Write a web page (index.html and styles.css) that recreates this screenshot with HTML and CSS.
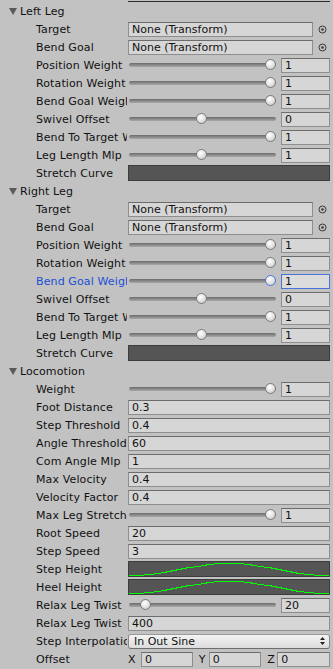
FILE: index.html
```html
<!DOCTYPE html>
<html>
<head>
<meta charset="utf-8">
<link rel="stylesheet" href="styles.css">
</head>
<body>
<div class="panel">
  <div class="topline"></div>

  <div class="row hdr"><div class="hlabel"><span class="tri"></span>Left Leg</div></div>
  <div class="row"><div class="label">Target</div><div class="ctrl"><div class="field">None (Transform)</div><span class="pick"><svg width="9" height="9" viewBox="0 0 9 9"><circle cx="4.5" cy="4.5" r="3.5" fill="none" stroke="#3a3a3a" stroke-width="1"/><circle cx="4.5" cy="4.5" r="1.3" fill="#3a3a3a"/></svg></span></div></div>
  <div class="row"><div class="label">Bend Goal</div><div class="ctrl"><div class="field">None (Transform)</div><span class="pick"><svg width="9" height="9" viewBox="0 0 9 9"><circle cx="4.5" cy="4.5" r="3.5" fill="none" stroke="#3a3a3a" stroke-width="1"/><circle cx="4.5" cy="4.5" r="1.3" fill="#3a3a3a"/></svg></span></div></div>
  <div class="row"><div class="label">Position Weight</div><div class="ctrl"><div class="slider"><div class="track"></div><div class="thumb" style="left:137px"></div></div><div class="field num">1</div></div></div>
  <div class="row"><div class="label">Rotation Weight</div><div class="ctrl"><div class="slider"><div class="track"></div><div class="thumb" style="left:137px"></div></div><div class="field num">1</div></div></div>
  <div class="row"><div class="label">Bend Goal Weight</div><div class="ctrl"><div class="slider"><div class="track"></div><div class="thumb" style="left:137px"></div></div><div class="field num">1</div></div></div>
  <div class="row"><div class="label">Swivel Offset</div><div class="ctrl"><div class="slider"><div class="track"></div><div class="thumb" style="left:68px"></div></div><div class="field num">0</div></div></div>
  <div class="row"><div class="label">Bend To Target Weight</div><div class="ctrl"><div class="slider"><div class="track"></div><div class="thumb" style="left:137px"></div></div><div class="field num">1</div></div></div>
  <div class="row"><div class="label">Leg Length Mlp</div><div class="ctrl"><div class="slider"><div class="track"></div><div class="thumb" style="left:68px"></div></div><div class="field num">1</div></div></div>
  <div class="row"><div class="label">Stretch Curve</div><div class="ctrl"><div class="curve"></div></div></div>

  <div class="row hdr"><div class="hlabel"><span class="tri"></span>Right Leg</div></div>
  <div class="row"><div class="label">Target</div><div class="ctrl"><div class="field">None (Transform)</div><span class="pick"><svg width="9" height="9" viewBox="0 0 9 9"><circle cx="4.5" cy="4.5" r="3.5" fill="none" stroke="#3a3a3a" stroke-width="1"/><circle cx="4.5" cy="4.5" r="1.3" fill="#3a3a3a"/></svg></span></div></div>
  <div class="row"><div class="label">Bend Goal</div><div class="ctrl"><div class="field">None (Transform)</div><span class="pick"><svg width="9" height="9" viewBox="0 0 9 9"><circle cx="4.5" cy="4.5" r="3.5" fill="none" stroke="#3a3a3a" stroke-width="1"/><circle cx="4.5" cy="4.5" r="1.3" fill="#3a3a3a"/></svg></span></div></div>
  <div class="row"><div class="label">Position Weight</div><div class="ctrl"><div class="slider"><div class="track"></div><div class="thumb" style="left:137px"></div></div><div class="field num">1</div></div></div>
  <div class="row"><div class="label">Rotation Weight</div><div class="ctrl"><div class="slider"><div class="track"></div><div class="thumb" style="left:137px"></div></div><div class="field num">1</div></div></div>
  <div class="row focus"><div class="label">Bend Goal Weight</div><div class="ctrl"><div class="slider"><div class="track"></div><div class="thumb" style="left:137px"></div></div><div class="field num">1</div></div></div>
  <div class="row"><div class="label">Swivel Offset</div><div class="ctrl"><div class="slider"><div class="track"></div><div class="thumb" style="left:68px"></div></div><div class="field num">0</div></div></div>
  <div class="row"><div class="label">Bend To Target Weight</div><div class="ctrl"><div class="slider"><div class="track"></div><div class="thumb" style="left:137px"></div></div><div class="field num">1</div></div></div>
  <div class="row"><div class="label">Leg Length Mlp</div><div class="ctrl"><div class="slider"><div class="track"></div><div class="thumb" style="left:68px"></div></div><div class="field num">1</div></div></div>
  <div class="row"><div class="label">Stretch Curve</div><div class="ctrl"><div class="curve"></div></div></div>

  <div class="row hdr"><div class="hlabel"><span class="tri"></span>Locomotion</div></div>
  <div class="row"><div class="label">Weight</div><div class="ctrl"><div class="slider"><div class="track"></div><div class="thumb" style="left:137px"></div></div><div class="field num">1</div></div></div>
  <div class="row"><div class="label">Foot Distance</div><div class="ctrl"><div class="field">0.3</div></div></div>
  <div class="row"><div class="label">Step Threshold</div><div class="ctrl"><div class="field">0.4</div></div></div>
  <div class="row"><div class="label">Angle Threshold</div><div class="ctrl"><div class="field">60</div></div></div>
  <div class="row"><div class="label">Com Angle Mlp</div><div class="ctrl"><div class="field">1</div></div></div>
  <div class="row"><div class="label">Max Velocity</div><div class="ctrl"><div class="field">0.4</div></div></div>
  <div class="row"><div class="label">Velocity Factor</div><div class="ctrl"><div class="field">0.4</div></div></div>
  <div class="row"><div class="label">Max Leg Stretch</div><div class="ctrl"><div class="slider"><div class="track"></div><div class="thumb" style="left:137px"></div></div><div class="field num">1</div></div></div>
  <div class="row"><div class="label">Root Speed</div><div class="ctrl"><div class="field">20</div></div></div>
  <div class="row"><div class="label">Step Speed</div><div class="ctrl"><div class="field">3</div></div></div>
  <div class="row"><div class="label">Step Height</div><div class="ctrl"><div class="curve"><svg width="200" height="16" viewBox="0 0 200 16"><polyline fill="none" stroke="#00ff00" stroke-width="1" shape-rendering="crispEdges" points="0,14.5 10,14.5 20,13.5 30,12.5 40,10.5 50,8.5 60,6.5 70,5.5 80,3.5 90,2.5 100,2.5 110,2.5 120,3.5 130,5.5 140,6.5 150,8.5 160,10.5 170,12.5 180,13.5 190,14.5 200,14.5"/></svg></div></div></div>
  <div class="row"><div class="label">Heel Height</div><div class="ctrl"><div class="curve"><svg width="200" height="16" viewBox="0 0 200 16"><polyline fill="none" stroke="#00ff00" stroke-width="1" shape-rendering="crispEdges" points="0,14.5 10,14.5 20,13.5 30,12.5 40,10.5 50,8.5 60,6.5 70,5.5 80,3.5 90,2.5 100,2.5 110,2.5 120,3.5 130,5.5 140,6.5 150,8.5 160,10.5 170,12.5 180,13.5 190,14.5 200,14.5"/></svg></div></div></div>
  <div class="row"><div class="label">Relax Leg Twist</div><div class="ctrl"><div class="slider"><div class="track"></div><div class="thumb" style="left:12px"></div></div><div class="field num">20</div></div></div>
  <div class="row"><div class="label">Relax Leg Twist</div><div class="ctrl"><div class="field">400</div></div></div>
  <div class="row"><div class="label">Step Interpolation</div><div class="ctrl"><div class="dropdown"><span>In Out Sine</span><svg width="5" height="8" viewBox="0 0 5 8"><path d="M2.5 0 L5 3 L0 3 Z M0 5 L5 5 L2.5 8 Z" fill="#222"/></svg></div></div></div>
  <div class="row"><div class="label">Offset</div><div class="ctrl vec">
    <div class="axis"><span class="ax ax-x">X</span><div class="field">0</div></div>
    <div class="axis"><span class="ax">Y</span><div class="field">0</div></div>
    <div class="axis"><span class="ax">Z</span><div class="field">0</div></div>
  </div></div>
</div>
</body>
</html>
```

FILE: styles.css
```css
html, body {
  margin: 0;
  padding: 0;
}
body {
  background: #c2c2c2;
  font-family: "DejaVu Sans", "Liberation Sans", sans-serif;
  font-size: 11px;
  color: #111;
  width: 333px;
  height: 669px;
  overflow: hidden;
}
.panel {
  padding-top: 1px;
}
.topline {
  margin-left: 128px;
  width: 202px;
  height: 1px;
  background: #2e2e2e;
}
.row {
  display: flex;
  align-items: center;
  height: 18px;
}
.hlabel {
  display: flex;
  align-items: center;
  padding-left: 9px;
  white-space: nowrap;
  letter-spacing: 0.1px;
}
.tri {
  width: 0;
  height: 0;
  border-left: 4px solid transparent;
  border-right: 4px solid transparent;
  border-top: 7px solid #5a5a5a;
  margin-right: 3px;
  margin-top: 1px;
}
.label {
  box-sizing: border-box;
  flex: none;
  width: 127px;
  margin-right: 1px;
  padding-left: 36px;
  white-space: nowrap;
  overflow: hidden;
  letter-spacing: 0.12px;
}
.focus .label {
  color: #1a4ed6;
}
.ctrl {
  flex: 1;
  min-width: 0;
  display: flex;
  align-items: center;
  margin-right: 3px;
  height: 18px;
}
.field {
  box-sizing: border-box;
  flex: 1;
  min-width: 0;
  height: 15px;
  line-height: 13px;
  padding-left: 3px;
  background: #d6d6d6;
  border: 1px solid #8e8e8e;
  border-top-color: #6c6c6c;
  white-space: nowrap;
  overflow: hidden;
}
.pick {
  flex: none;
  width: 17px;
  height: 15px;
  display: flex;
  align-items: center;
  justify-content: center;
  padding-left: 2px;
  box-sizing: border-box;
}
.pick svg {
  display: block;
}
.slider {
  position: relative;
  flex: 1;
  height: 18px;
}
.track {
  position: absolute;
  left: 1px;
  right: 0;
  top: 7px;
  height: 4px;
  border-radius: 2px;
  background: linear-gradient(#6a6a6a, #8a8a8a 50%, #a8a8a8);
}
.thumb {
  position: absolute;
  top: 3px;
  width: 11px;
  height: 11px;
  box-sizing: border-box;
  border-radius: 50%;
  border: 1px solid #7a7a7a;
  background: radial-gradient(circle at 40% 35%, #ffffff, #e6e6e6 45%, #bdbdbd);
}
.focus .thumb {
  border: 1.5px solid #4f78e0;
}
.num {
  flex: none;
  width: 49px;
  margin-left: 5px;
}
.focus .num {
  border-color: #4a72d8;
  background: #dcdcdc;
}
.curve {
  box-sizing: border-box;
  flex: 1;
  height: 16px;
  background: #555555;
  border: 1px solid #3c3c3c;
  overflow: hidden;
  position: relative;
}
.curve svg {
  position: absolute;
  left: 0;
  top: -1px;
  display: block;
}
.dropdown {
  box-sizing: border-box;
  flex: 1;
  height: 15px;
  display: flex;
  align-items: center;
  justify-content: space-between;
  padding: 0 4px 0 5px;
  border: 1px solid #8a8a8a;
  border-top-color: #9a9a9a;
  border-bottom-color: #6e6e6e;
  border-radius: 3px;
  background: linear-gradient(#f4f4f4, #dcdcdc);
}
.dropdown span {
  line-height: 13px;
}
.vec {
  gap: 4px;
}
.axis {
  flex: 1;
  min-width: 0;
  display: flex;
  align-items: center;
}
.ax {
  flex: none;
  width: 12px;
  padding-left: 2px;
  box-sizing: border-box;
}
.ax-x {
  width: 13px;
  padding-left: 0;
}
```
